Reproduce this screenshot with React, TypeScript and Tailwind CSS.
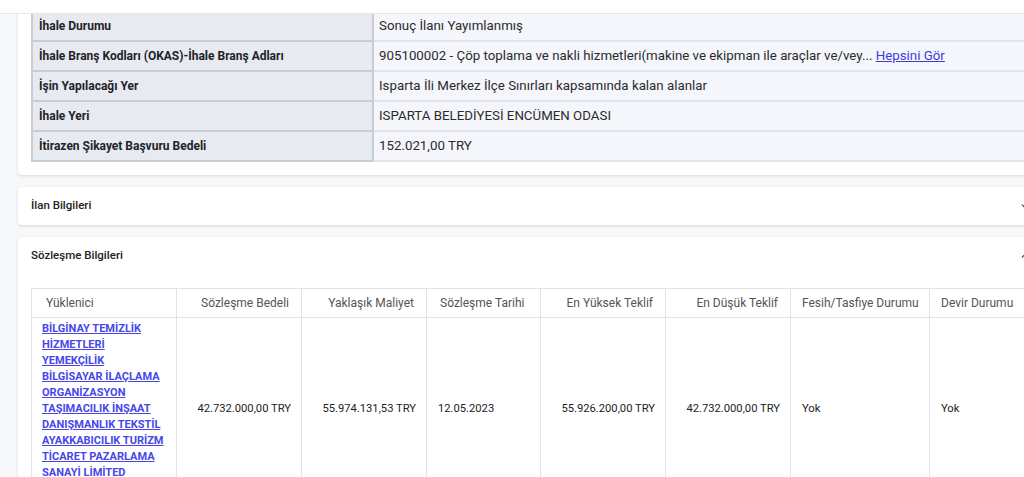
import { ChevronDown, ChevronUp } from 'lucide-react'

const details = [
  { label: 'İhale Durumu', value: 'Sonuç İlanı Yayımlanmış' },
  {
    label: 'İhale Branş Kodları (OKAS)-İhale Branş Adları',
    value: '905100002 - Çöp toplama ve nakli hizmetleri(makine ve ekipman ile araçlar ve/vey...',
    more: true,
  },
  { label: 'İşin Yapılacağı Yer', value: 'Isparta İli Merkez İlçe Sınırları kapsamında kalan alanlar' },
  { label: 'İhale Yeri', value: 'ISPARTA BELEDİYESİ ENCÜMEN ODASI' },
  { label: 'İtirazen Şikayet Başvuru Bedeli', value: '152.021,00 TRY' },
]

const contractCols = [
  { title: 'Yüklenici', w: 'w-[145px]', align: 'text-left pl-[14px]' },
  { title: 'Sözleşme Bedeli', w: 'w-[125px]', align: 'text-right pr-[12px]' },
  { title: 'Yaklaşık Maliyet', w: 'w-[125px]', align: 'text-right pr-[12px]' },
  { title: 'Sözleşme Tarihi', w: 'w-[114px]', align: 'text-left pl-[13px]' },
  { title: 'En Yüksek Teklif', w: 'w-[125px]', align: 'text-right pr-[12px]' },
  { title: 'En Düşük Teklif', w: 'w-[125px]', align: 'text-right pr-[12px]' },
  { title: 'Fesih/Tasfiye Durumu', w: 'w-[139px]', align: 'text-left pl-[11px]' },
  { title: 'Devir Durumu', w: '', align: 'text-left pl-[11px]' },
]

const cell = 'border border-[#e3e3e3] text-[11.2px] text-[#222]'

export default function App() {
  return (
    <div className="relative h-[477px] w-[1024px] overflow-hidden bg-[#f7f8fa] font-['Roboto',sans-serif] text-[#222]">
      {/* sticky header edge */}
      <div className="absolute inset-x-0 top-0 z-10 h-[14px] border-b border-[#e4e6ea] bg-white" />

      <div className="flex w-[1045px] flex-col gap-[12px] pl-[18px] pt-[10px]">
        {/* Genel bilgiler */}
        <section className="rounded-b-[4px] bg-white px-[13px] pb-[13px] shadow-[0_1px_3px_rgba(0,0,0,0.12)]">
          <table className="w-full border-collapse">
            <tbody>
              {details.map((d) => (
                <tr key={d.label} className="h-[30px]">
                  <td className="w-[341px] border-2 border-[#c8ccd3] bg-[#e7eaf0] px-[6px] text-[12px] font-bold text-[#1f2329]">
                    {d.label}
                  </td>
                  <td className="border-y-2 border-[#e1e4ea] bg-[#f4f6fb] px-[5px] text-[13.3px] text-[#2b2b2b]">
                    {d.value}
                    {d.more && (
                      <>
                        {' '}
                        <a href="#" className="text-[#3b3be0] underline">
                          Hepsini Gör
                        </a>
                      </>
                    )}
                  </td>
                </tr>
              ))}
            </tbody>
          </table>
        </section>

        {/* İlan Bilgileri */}
        <section className="flex h-[38px] items-center justify-between rounded-[4px] bg-white px-[13px] shadow-[0_1px_3px_rgba(0,0,0,0.14)]">
          <h2 className="text-[11.5px] font-medium text-[#222]">İlan Bilgileri</h2>
          <ChevronDown className="size-[13px] text-[#444]" strokeWidth={2} />
        </section>

        {/* Sözleşme Bilgileri */}
        <section className="rounded-[4px] bg-white px-[13px] shadow-[0_1px_3px_rgba(0,0,0,0.14)]">
          <div className="flex h-[37px] items-center justify-between">
            <h2 className="text-[11.5px] font-medium text-[#222]">Sözleşme Bilgileri</h2>
            <ChevronUp className="size-[13px] text-[#444]" strokeWidth={2} />
          </div>
          <table className="mt-[14px] w-full table-fixed border-collapse text-[12px]">
            <thead>
              <tr className="h-[29px]">
                {contractCols.map((c) => (
                  <th key={c.title} className={`${c.w} ${c.align} border border-[#e3e3e3] font-normal text-[#555]`}>
                    {c.title}
                  </th>
                ))}
              </tr>
            </thead>
            <tbody>
              <tr>
                <td className="border border-[#e3e3e3] pt-[3px] pr-[10px] pb-[4px] pl-[10px] align-middle text-[11px] leading-[16px]">
                  <a href="#" className="font-bold text-[#4747e8] underline">
                    BİLGİNAY TEMİZLİK HİZMETLERİ YEMEKÇİLİK BİLGİSAYAR İLAÇLAMA ORGANİZASYON TAŞIMACILIK İNŞAAT
                    DANIŞMANLIK TEKSTİL AYAKKABICILIK TURİZM TİCARET PAZARLAMA SANAYİ LİMİTED ŞİRKETİ
                  </a>
                </td>
                <td className={`${cell} pr-[10px] text-right`}>42.732.000,00 TRY</td>
                <td className={`${cell} pr-[10px] text-right`}>55.974.131,53 TRY</td>
                <td className={`${cell} pl-[11px]`}>12.05.2023</td>
                <td className={`${cell} pr-[10px] text-right`}>55.926.200,00 TRY</td>
                <td className={`${cell} pr-[10px] text-right`}>42.732.000,00 TRY</td>
                <td className={`${cell} pl-[11px]`}>Yok</td>
                <td className={`${cell} pl-[11px]`}>Yok</td>
              </tr>
            </tbody>
          </table>
        </section>
      </div>
    </div>
  )
}
